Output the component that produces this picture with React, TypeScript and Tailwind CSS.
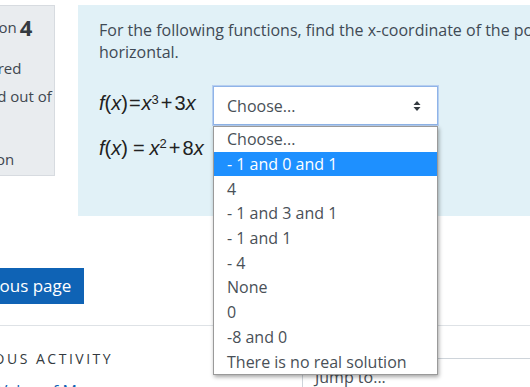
import React from "react";

const options = [
  "Choose...",
  "- 1 and 0 and 1",
  "4",
  "- 1 and 3 and 1",
  "- 1 and 1",
  "- 4",
  "None",
  "0",
  "-8 and 0",
  "There is no real solution",
];

function Arrows() {
  return (
    <svg width="8" height="12" viewBox="0 0 8 12" className="shrink-0">
      <path d="M4 1 L7.5 5 H0.5 Z" fill="#343a40" />
      <path d="M4 11 L7.5 7 H0.5 Z" fill="#343a40" />
    </svg>
  );
}

function Select({ open }: { open?: boolean }) {
  return (
    <div className="relative w-[225px]">
      <div
        className={`h-[39px] bg-white flex items-center justify-between pl-[13px] pr-[16px] text-[16px] text-[#495057] border ${
          open ? "border-[#8fb4e8] shadow-[0_0_0_1px_#b7cff0]" : "border-[#8f959e]"
        }`}
      >
        <span>Choose...</span>
        <Arrows />
      </div>
      {open && (
        <div className="absolute left-0 top-[40px] w-[225px] z-10 bg-white border border-[#9a9a9a] shadow-[1px_2px_4px_rgba(0,0,0,0.35)]">
          {options.map((o, i) => (
            <div
              key={o}
              className={`h-[24.7px] flex items-center pl-[13px] text-[16px] leading-none whitespace-nowrap ${
                i === 1 ? "bg-[#1e90ff] text-white" : "text-[#495057]"
              }`}
            >
              {o}
            </div>
          ))}
        </div>
      )}
    </div>
  );
}

export default function App() {
  return (
    <div className="w-[530px] h-[387px] overflow-hidden bg-white relative font-['Open_Sans',sans-serif] text-[#495057]">
      {/* question row */}
      <div className="flex pt-[5px] -ml-[57px] w-[1100px]">
        <div className="w-[112px] h-[171px] shrink-0 bg-[#e9ecef] border border-[#d7dbe0] pl-[9px] pt-[10px] text-[15px] leading-[20px] text-[#3f4750] whitespace-nowrap">
          <div className="h-[22px] flex items-center gap-[3px]">
            <span>Question</span>
            <span className="text-[22px] font-bold text-[#343a40]">4</span>
          </div>
          <div className="tracking-[-0.9px]">Not yet</div>
          <div>answered</div>
          <div className="mt-[8px]">Marked out of</div>
          <div>1.00</div>
          <div className="mt-[3px]">Flag</div>
          <div>question</div>
        </div>
        <div className="ml-[23px] flex-1 h-[211px] bg-[#e1f1f7] pl-[21px] pt-[14px]">
          <p className="w-[660px] text-[16px] leading-[22px] text-[#3f4a55]">
            For the following functions, find the x-coordinate of the point(s) where the tangent is horizontal.
          </p>
          <div className="mt-[23px] flex items-center">
            <div className="w-[114px] text-[20px] text-[#222] font-['Liberation_Sans',sans-serif] -mt-[5px] whitespace-nowrap">
              <i>f</i>(<i>x</i>)<span className="mx-[1px]">=</span><i>x</i><sup className="text-[13px]">3</sup><span className="mx-[2px]">+</span>3<i>x</i>
            </div>
            <Select open />
          </div>
          <div className="mt-[3px] flex items-center">
            <div className="w-[114px] text-[20px] text-[#222] font-['Liberation_Sans',sans-serif] whitespace-nowrap">
              <i>f</i>(<i>x</i>)<span className="mx-[5px]">=</span><i>x</i><sup className="text-[13px]">2</sup><span className="mx-[2px]">+</span>8<i>x</i>
            </div>
            <Select />
          </div>
        </div>
      </div>

      {/* navigation */}
      <div className="mt-[52px] -ml-[53px]">
        <div className="inline-flex items-center h-[36px] px-[13px] bg-[#0f63b5] text-white text-[17px]">
          Previous page
        </div>
      </div>
      <div className="mt-[21px] border-t border-[#dee2e6] w-[700px]" />
      <div className="flex -ml-[56px]">
        <div className="w-[358px] shrink-0 pt-[22px]">
          <div className="text-[14px] tracking-[2.5px] text-[#343a40] whitespace-nowrap">PREVIOUS ACTIVITY</div>
          <div className="mt-[10px] ml-[13px] text-[16px] text-[#0f63b5] whitespace-nowrap">Time Value of Money</div>
        </div>
        <div className="mt-[32px] flex-1 h-[40px] border-t border-l border-[#ced4da] pl-[12px] pt-[6px] text-[16px] text-[#495057]">
          Jump to...
        </div>
      </div>
    </div>
  );
}
